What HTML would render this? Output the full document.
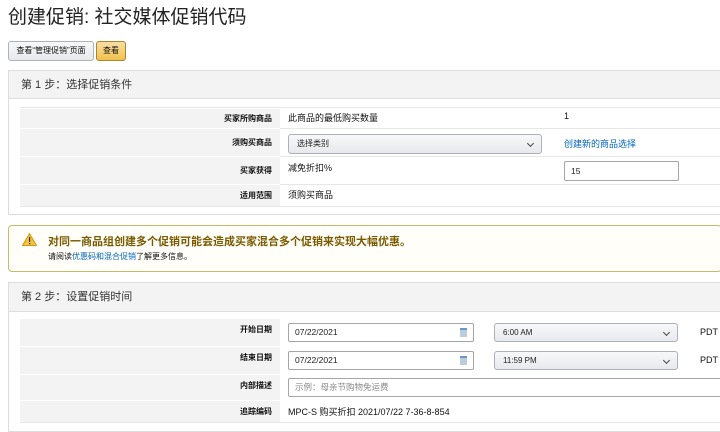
<!DOCTYPE html>
<html><head><meta charset="utf-8"><style>
*{box-sizing:border-box;margin:0;padding:0}
body{width:720px;height:425px;overflow:hidden;background:#fff;font-family:"Liberation Sans","Noto Sans CJK SC",sans-serif;color:#111;position:relative;font-size:9px}
.a{position:absolute;white-space:nowrap}
.t{font-size:19px;left:8px;top:2px;color:#222}
.btn{border:1px solid #adb1b8;border-radius:3px;background:linear-gradient(#f7f8fa,#e7e9ec);font-size:8px;line-height:18px;text-align:center}
.sec{left:8px;width:720px;border:1px solid #ddd;border-right:none}
.hd{background:#f3f3f3;border-bottom:1px solid #ddd;font-size:11px;color:#333;padding-left:12px}
.lab{background:#f3f3f3;left:20px;width:260px;text-align:right;padding-right:8px;font-weight:bold;font-size:8px;border-top:1px solid #fff}
.line{left:20px;width:700px;height:1px;background:#e7e7e7}
.inp{border:1px solid #a6a6a6;border-radius:2px;background:#fff;font-size:8.5px;padding-left:6px;color:#222}
.sel{border:1px solid #adb1b8;border-radius:3px;background:linear-gradient(#f7f8fa,#e7e9ec);font-size:8px;padding-left:8px;color:#222}
.chev{position:absolute;right:8px;top:6px;width:5px;height:5px;border-right:1px solid #444;border-bottom:1px solid #444;transform:rotate(45deg)}
</style></head><body>
<div class="a t">创建促销: 社交媒体促销代码</div>
<div class="a btn" style="left:8px;top:41px;width:86px;height:20px">查看“管理促销”页面</div>
<div class="a btn" style="left:96px;top:41px;width:30px;height:20px;background:linear-gradient(#f7dfa5,#f0c14b);border-color:#a88734">查看</div>

<div class="a sec" style="top:70px;height:145px"></div>
<div class="a hd" style="left:9px;top:71px;width:711px;height:28px;line-height:28px">第 1 步：选择促销条件</div>
<div class="a line" style="top:107px"></div>
<div class="a lab" style="top:108px;height:20px;line-height:20px">买家所购商品</div>
<div class="a" style="left:288px;top:111px">此商品的最低购买数量</div>
<div class="a" style="left:564px;top:111px">1</div>
<div class="a line" style="top:128px"></div>
<div class="a lab" style="top:128px;height:28px;line-height:28px">须购买商品</div>
<div class="a sel" style="left:288px;top:134px;width:254px;height:20px;line-height:18px">选择类别<span class="chev"></span></div>
<div class="a" style="left:564px;top:137px;color:#0066c0">创建新的商品选择</div>
<div class="a line" style="top:156px"></div>
<div class="a lab" style="top:156px;height:28px;line-height:28px">买家获得</div>
<div class="a" style="left:288px;top:161px">减免折扣%</div>
<div class="a inp" style="left:564px;top:161px;width:115px;height:20px;line-height:18px">15</div>
<div class="a line" style="top:184px"></div>
<div class="a lab" style="top:184px;height:22px;line-height:22px">适用范围</div>
<div class="a" style="left:288px;top:188px">须购买商品</div>
<div class="a line" style="top:206px"></div>

<div class="a" style="left:8px;top:225px;width:714px;height:47px;border:1px solid #c9b96a;border-radius:4px;background:#fffef8"></div>
<svg class="a" style="left:22px;top:233px" width="15" height="13" viewBox="0 0 15 13"><path d="M7.5 0.5L14.5 12.5H0.5Z" fill="#f4c23b" stroke="#c99a17"/><rect x="7" y="4" width="1.2" height="5" fill="#333"/><rect x="7" y="10" width="1.2" height="1.2" fill="#333"/></svg>
<div class="a" style="left:48px;top:233px;font-size:11px;font-weight:bold;color:#7a5a00">对同一商品组创建多个促销可能会造成买家混合多个促销来实现大幅优惠。</div>
<div class="a" style="left:48px;top:251px;font-size:8px">请阅读<span style="color:#0066c0">优惠码和混合促销</span>了解更多信息。</div>

<div class="a sec" style="top:282px;height:150px"></div>
<div class="a hd" style="left:9px;top:283px;width:711px;height:29px;line-height:29px">第 2 步：设置促销时间</div>
<div class="a lab" style="top:318px;height:28px;line-height:22px">开始日期</div>
<div class="a inp" style="left:288px;top:323px;width:186px;height:19px;line-height:17px">07/22/2021<span style="position:absolute;right:6px;top:4px;width:7px;height:9px;background:#bcd;border-top:2px solid #69c"></span></div>
<div class="a sel" style="left:494px;top:323px;width:184px;height:19px;line-height:17px">6:00 AM<span class="chev"></span></div>
<div class="a" style="left:700px;top:327px">PDT</div>
<div class="a lab" style="top:346px;height:28px;line-height:22px">结束日期</div>
<div class="a inp" style="left:288px;top:351px;width:186px;height:19px;line-height:17px">07/22/2021<span style="position:absolute;right:6px;top:4px;width:7px;height:9px;background:#bcd;border-top:2px solid #69c"></span></div>
<div class="a sel" style="left:494px;top:351px;width:184px;height:19px;line-height:17px">11:59 PM<span class="chev"></span></div>
<div class="a" style="left:700px;top:355px">PDT</div>
<div class="a lab" style="top:374px;height:26px;line-height:22px">内部描述</div>
<div class="a inp" style="left:288px;top:378px;width:440px;height:19px;line-height:17px;color:#888">示例：母亲节购物免运费</div>
<div class="a lab" style="top:400px;height:22px;line-height:22px">追踪编码</div>
<div class="a" style="left:288px;top:405px">MPC-S 购买折扣 2021/07/22 7-36-8-854</div>
<div class="a line" style="top:422px"></div>
</body></html>
